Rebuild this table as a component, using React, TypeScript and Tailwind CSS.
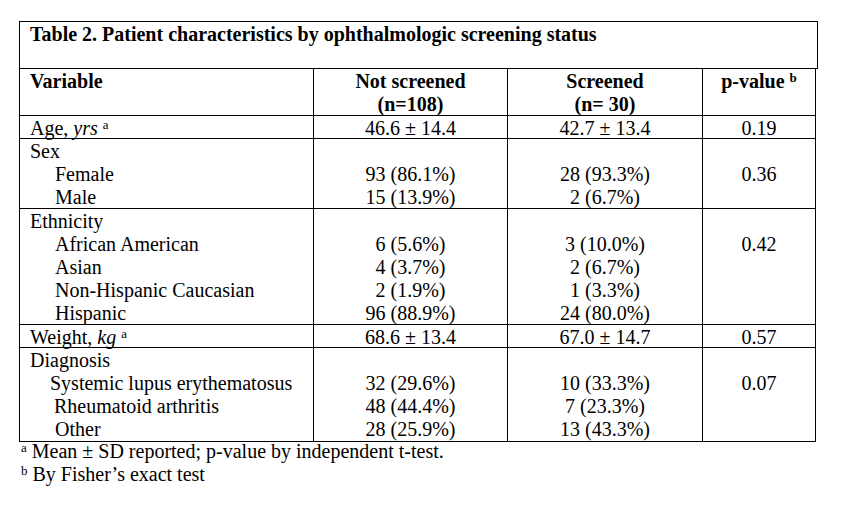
import React from "react";

type Line = {
  label: React.ReactNode;
  indent?: string;
  notScreened?: string;
  screened?: string;
  p?: string;
};

type Group = { lines: Line[]; h: string };

const Sup = ({ children }: { children: React.ReactNode }) => (
  <sup className="text-[13px]">{children}</sup>
);

const groups: Group[] = [
  {
    h: "h-[22px] leading-[22px]",
    lines: [
      {
        label: (
          <>
            Age, <i>yrs</i> <Sup>a</Sup>
          </>
        ),
        notScreened: "46.6 ± 14.4",
        screened: "42.7 ± 13.4",
        p: "0.19",
      },
    ],
  },
  {
    h: "h-[69px]",
    lines: [
      { label: "Sex" },
      { label: "Female", indent: "pl-[25px]", notScreened: "93 (86.1%)", screened: "28 (93.3%)", p: "0.36" },
      { label: "Male", indent: "pl-[25px]", notScreened: "15 (13.9%)", screened: "2 (6.7%)" },
    ],
  },
  {
    h: "h-[115px]",
    lines: [
      { label: "Ethnicity" },
      { label: "African American", indent: "pl-[25px]", notScreened: "6 (5.6%)", screened: "3 (10.0%)", p: "0.42" },
      { label: "Asian", indent: "pl-[25px]", notScreened: "4 (3.7%)", screened: "2 (6.7%)" },
      { label: "Non-Hispanic Caucasian", indent: "pl-[25px]", notScreened: "2 (1.9%)", screened: "1 (3.3%)" },
      { label: "Hispanic", indent: "pl-[25px]", notScreened: "96 (88.9%)", screened: "24 (80.0%)" },
    ],
  },
  {
    h: "h-[22px] leading-[22px]",
    lines: [
      {
        label: (
          <>
            Weight, <i>kg</i> <Sup>a</Sup>
          </>
        ),
        notScreened: "68.6 ± 13.4",
        screened: "67.0 ± 14.7",
        p: "0.57",
      },
    ],
  },
  {
    h: "h-[93px]",
    lines: [
      { label: "Diagnosis" },
      { label: "Systemic lupus erythematosus", indent: "pl-[20px]", notScreened: "32 (29.6%)", screened: "10 (33.3%)", p: "0.07" },
      { label: "Rheumatoid arthritis", indent: "pl-[24px]", notScreened: "48 (44.4%)", screened: "7 (23.3%)" },
      { label: "Other", indent: "pl-[25px]", notScreened: "28 (25.9%)", screened: "13 (43.3%)" },
    ],
  },
];

const gridCols = "grid grid-cols-[294px_194px_195px_113px] border-b border-black";
const cell = "border-r border-black pt-[1px]";

const App = () => {
  return (
    <div className="w-[865px] h-[514px] bg-white text-black font-['Liberation_Serif','Times_New_Roman',serif] text-[20px] leading-[23px] pt-[21px] pl-[19px]">
      {/* TITLE */}
      <div className="w-[799px] h-[48px] border border-black pl-[10px] pt-[1px] font-bold">
        Table 2. Patient characteristics by ophthalmologic screening status
      </div>

      {/* TABLE */}
      <div className="w-[797px] border-l border-black">
        {/* HEADER */}
        <div className={`${gridCols} h-[47px] font-bold`}>
          <div className={`${cell} pl-[10px]`}>Variable</div>
          <div className={`${cell} text-center`}>
            <div>Not screened</div>
            <div>(n=108)</div>
          </div>
          <div className={`${cell} text-center`}>
            <div>Screened</div>
            <div>(n= 30)</div>
          </div>
          <div className={`${cell} text-center`}>
            p-value <Sup>b</Sup>
          </div>
        </div>

        {/* ROWS */}
        {groups.map((g, gi) => (
          <div key={gi} className={`${gridCols} box-content ${g.h}`}>
            <div className={`${cell} pl-[10px]`}>
              {g.lines.map((l, i) => (
                <div key={i} className={`whitespace-nowrap ${l.indent ?? ""}`}>
                  {l.label}
                </div>
              ))}
            </div>
            <div className={`${cell} text-center`}>
              {g.lines.map((l, i) => (
                <div key={i}>{l.notScreened ?? "\u00a0"}</div>
              ))}
            </div>
            <div className={`${cell} text-center`}>
              {g.lines.map((l, i) => (
                <div key={i}>{l.screened ?? "\u00a0"}</div>
              ))}
            </div>
            <div className={`${cell} text-center`}>
              {g.lines.map((l, i) => (
                <div key={i}>{l.p ?? "\u00a0"}</div>
              ))}
            </div>
          </div>
        ))}
      </div>

      {/* FOOTNOTES */}
      <div className="pl-[2px] -mt-[2px]">
        <div>
          <Sup>a</Sup> Mean ± SD reported; p-value by independent t-test.
        </div>
        <div>
          <Sup>b</Sup> By Fisher’s exact test
        </div>
      </div>
    </div>
  );
};

export default App;
